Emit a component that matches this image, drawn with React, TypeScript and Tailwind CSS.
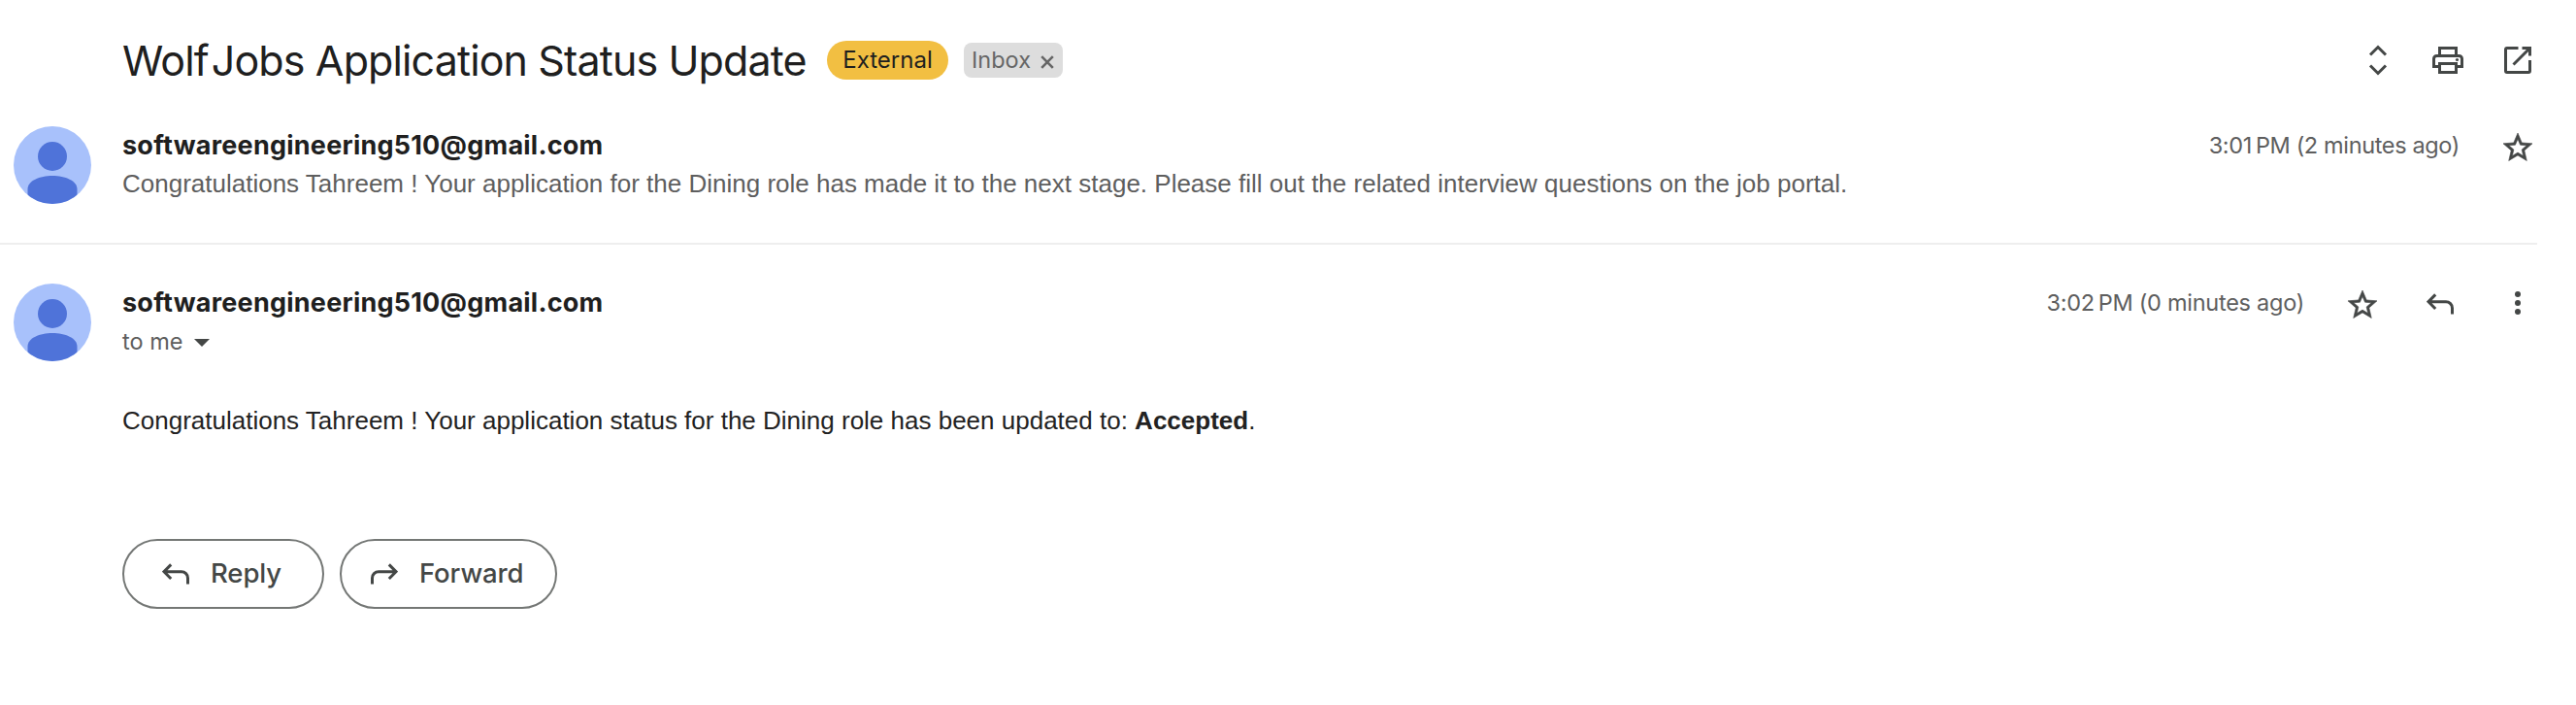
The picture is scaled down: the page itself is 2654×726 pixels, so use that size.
import type { ReactNode } from "react";

const INK = "#444746";

function IconBox({ children, className = "" }: { children: ReactNode; className?: string }) {
  return (
    <button className={`flex h-10 w-10 shrink-0 items-center justify-center text-[#444746] ${className}`}>
      {children}
    </button>
  );
}

function ExpandIcon() {
  return (
    <svg width="40" height="40" viewBox="0 0 40 40" fill="none" stroke={INK} strokeWidth="3">
      <path d="M12 14.5L20 6.5L28 14.5M12 25.5L20 33.5L28 25.5" />
    </svg>
  );
}

function PrintIcon() {
  return (
    <svg width="40" height="40" viewBox="0 0 40 40" fill="none" stroke={INK} strokeWidth="3">
      <path d="M11.5 15.5V7.5H28.5V15.5" />
      <path d="M11.5 26.5H5.5V18.5A3 3 0 0 1 8.5 15.5H31.5A3 3 0 0 1 34.5 18.5V26.5H28.5" />
      <path d="M11.5 23.5H28.5V32.5H11.5Z" />
      <circle cx="29.5" cy="19.5" r="1.6" fill={INK} stroke="none" />
    </svg>
  );
}

function OpenIcon() {
  return (
    <svg width="40" height="40" viewBox="0 0 40 40" fill="none" stroke={INK} strokeWidth="3">
      <path d="M20.5 7.5H9A1.5 1.5 0 0 0 7.5 9V31A1.5 1.5 0 0 0 9 32.5H31A1.5 1.5 0 0 0 32.5 31V20" />
      <path d="M24.5 7.5H32.5V15.5M32 8L15.5 24.5" />
    </svg>
  );
}

function StarIcon() {
  return (
    <svg
      className="shrink-0"
      width="36"
      height="36"
      viewBox="0 0 24 24"
      fill={INK}
      stroke={INK}
      strokeWidth="0.4"
    >
      <path d="M22 9.24l-7.19-.62L12 2 9.19 8.63 2 9.24l5.46 4.73L5.82 21 12 17.27 18.18 21l-1.63-7.03L22 9.24zM12 15.4l-3.76 2.27 1-4.28-3.32-2.88 4.38-.38L12 6.1l1.71 4.04 4.38.38-3.32 2.88 1 4.28L12 15.4z" />
    </svg>
  );
}

function ReplyIcon({ className = "" }: { className?: string }) {
  return (
    <svg className={className} width="28" height="22" viewBox="0 0 28 22" fill="none" stroke={INK} strokeWidth="3">
      <path d="M9.2 1.4L2 8.7L9.2 16M2 8.7H20A6.5 6.5 0 0 1 26.5 15.2V21.5" />
    </svg>
  );
}

function DotsIcon() {
  return (
    <svg width="40" height="40" viewBox="0 0 40 40" fill={INK}>
      <circle cx="20" cy="11" r="3" />
      <circle cx="20" cy="20" r="3" />
      <circle cx="20" cy="29" r="3" />
    </svg>
  );
}

function Avatar() {
  return (
    <svg className="ml-3.5 h-20 w-20 shrink-0 rounded-full" viewBox="0 0 80 80">
      <rect width="80" height="80" fill="#a8c1fb" />
      <circle cx="40" cy="31" r="15" fill="#4f73d9" />
      <path d="M14.5 80V65C14.5 56 27 51 40 51S65.5 56 65.5 65V80Z" fill="#4f73d9" />
    </svg>
  );
}

function Sender() {
  return (
    <h3 className="text-[27px] leading-9 font-[650] tracking-[0.23px] text-[#1f1f1f]">
      softwareengineering510@gmail.com
    </h3>
  );
}

export default function App() {
  return (
    <div className="h-[726px] w-full overflow-hidden bg-white font-['Inter',sans-serif] text-[#1f1f1f]">
      <div className="w-[2614px]">
        <header className="flex h-[124px] items-center pl-[126px]">
          <h2 className="w-[705px] text-[43px] leading-[56px] tracking-[-0.88px] whitespace-nowrap">
            Wolf<span className="ml-[3px]">Jobs</span> Application Status Update
          </h2>
          <span className="ml-[21px] flex h-10 w-[125px] items-center justify-center rounded-[20px] bg-[#f2bf42] text-2xl">
            External
          </span>
          <span className="ml-4 flex h-9 w-[102px] items-center rounded-lg bg-[#ddd] pl-2 text-[23.5px] text-[#666]">
            Inbox
            <svg className="mt-[3px] ml-[10px]" width="14" height="14" viewBox="0 0 14 14" stroke="#666" strokeWidth="2.6">
              <path d="M1.2 1.2L12.8 12.8M12.8 1.2L1.2 12.8" />
            </svg>
          </span>
          <div className="ml-auto flex gap-8">
            <IconBox><ExpandIcon /></IconBox>
            <IconBox><PrintIcon /></IconBox>
            <IconBox><OpenIcon /></IconBox>
          </div>
        </header>

        <section className="flex h-32 items-start border-b-2 border-[#eee] pt-1.5">
          <Avatar />
          <div className="ml-8 pt-0.5">
            <Sender />
            <p className="-mt-px font-['Liberation_Sans',Arial,sans-serif] text-[26px] leading-[44px] whitespace-nowrap text-[#5e5e5e]">
              Congratulations Tahreem ! Your application for the Dining role has made it to the next stage. Please fill
              out the related interview questions on the job portal.
            </p>
          </div>
          <div className="ml-auto flex items-start">
            <time className="mt-0.5 mr-10 text-[23.5px] leading-9 tracking-[-0.36px] text-[#5e5e5e]">
              3:01{"\u202f"}PM (2 minutes ago)
            </time>
            <IconBox className="mt-0.5"><StarIcon /></IconBox>
          </div>
        </section>

        <section className="flex items-start pt-10">
          <Avatar />
          <div className="ml-8 pt-0.5">
            <Sender />
            <div className="flex items-center text-[23.5px] leading-[44px] text-[#5e5e5e]">
              to me
              <svg className="mt-px ml-3" width="16" height="8" viewBox="0 0 16 8" fill={INK}>
                <path d="M0 0H16L8 8Z" />
              </svg>
            </div>
            <p className="mt-[39px] font-['Liberation_Sans',Arial,sans-serif] text-[26px] leading-10 whitespace-nowrap text-[#222]">
              Congratulations Tahreem ! Your application status for the Dining role has been updated to: <b>Accepted</b>.
            </p>
            <div className="mt-[102px] flex gap-4 text-[27.5px] font-medium tracking-[-0.1px] text-[#444746]">
              <button className="flex h-[72px] w-[208px] items-center rounded-full border-2 border-[#747775] pl-[39px]">
                <ReplyIcon />
                <span className="ml-[22px]">Reply</span>
              </button>
              <button className="flex h-[72px] w-[224px] items-center rounded-full border-2 border-[#747775] pl-[30px]">
                <ReplyIcon className="-scale-x-100" />
                <span className="ml-[22px]">Forward</span>
              </button>
            </div>
          </div>
          <div className="ml-auto flex items-start">
            <time className="mt-0.5 mr-10 text-[23.5px] leading-9 tracking-[-0.27px] text-[#5e5e5e]">
              3:02{"\u202f"}PM (0 minutes ago)
            </time>
            <IconBox className="mt-0.5"><StarIcon /></IconBox>
            <IconBox className="ml-10 mt-px"><ReplyIcon /></IconBox>
            <IconBox className="ml-10"><DotsIcon /></IconBox>
          </div>
        </section>
      </div>
    </div>
  );
}
